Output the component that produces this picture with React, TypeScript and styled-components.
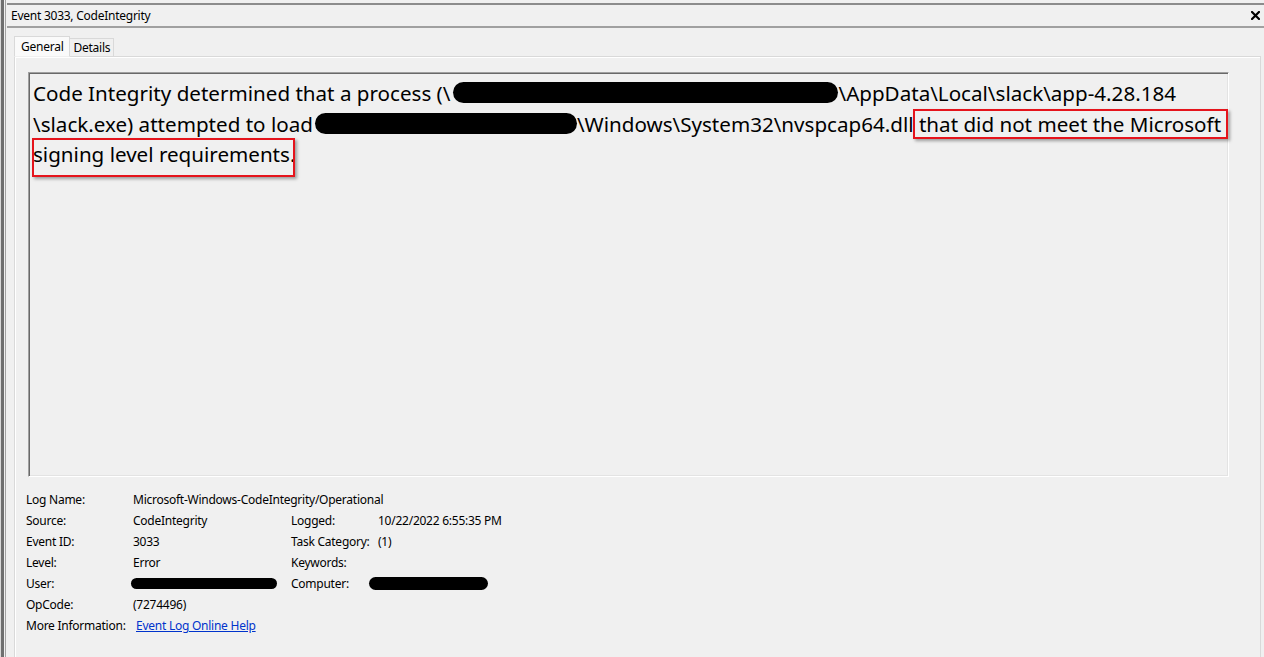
import React from 'react'
import styled, { createGlobalStyle } from 'styled-components'

/////////GLOBAL/////////
const GlobalStyle = createGlobalStyle`
	html, body {
		margin: 0;
		padding: 0;
		background: #f0f0f0;
	}
	body {
		font-family: 'Noto Sans', 'Open Sans', sans-serif;
		color: #000;
		letter-spacing: -0.25px;
		overflow: hidden;
	}
`

/////////STYLED/////////
const Window = styled.div`
	box-sizing: border-box;
	height: 657px;
	display: flex;
	flex-direction: column;
	padding-left: 7px;
	overflow: hidden;
	background: linear-gradient(
		to right,
		#d8d8d8 0 1px,
		#6f6f6f 1px 4px,
		#f0f0f0 4px 5px,
		#a3a3a3 5px 6px,
		#f0f0f0 6px
	);
`
const TitleBar = styled.div`
	margin-top: 3px;
	height: 21px;
	display: flex;
	align-items: center;
	justify-content: space-between;
	padding: 0 4px;
	border-top: 2px solid #8c8c8c;
	border-bottom: 2px solid #a0a0a0;
	font-size: 12px;
`
const CloseButton = styled.div`
	display: flex;
	align-items: center;
	justify-content: center;
	width: 10px;
	height: 10px;
	cursor: pointer;
`
const TabBar = styled.div`
	display: flex;
	align-items: flex-end;
	margin: 8px 0 0 7px;
	position: relative;
	z-index: 1;
`
const Tab = styled.div<{ $active?: boolean }>`
	box-sizing: border-box;
	height: ${(p) => (p.$active ? '21px' : '18px')};
	display: flex;
	align-items: center;
	padding: 0 ${(p) => (p.$active ? '6px' : '3px')};
	font-size: 12px;
	background: ${(p) => (p.$active ? '#fafafa' : '#f0f0f0')};
	border: 1px solid #d9d9d9;
	border-bottom: ${(p) => (p.$active ? '1px solid #f0f0f0' : 'none')};
	margin-bottom: ${(p) => (p.$active ? '-1px' : '0')};
	${(p) => (p.$active ? '' : 'border-left: none;')}
`
const Panel = styled.div`
	flex: 1;
	margin: 0 3px 0 7px;
	padding: 15px 0 0 11px;
	border: 1px solid #d9d9d9;
	border-bottom: none;
	box-shadow: inset 1px 1px #ffffff;
`
const MessageBox = styled.div`
	box-sizing: border-box;
	width: 1201px;
	height: 405px;
	margin-left: 2px;
	padding: 5px 4px;
	border: 1px solid;
	border-color: #a0a0a0 #ffffff #ffffff #a0a0a0;
	box-shadow: inset 1px 1px #696969, inset -1px -1px #e3e3e3;
	font-size: 20.6px;
	letter-spacing: 0;
`
const Line = styled.div`
	height: 30.5px;
	line-height: 30.5px;
	white-space: nowrap;
`
const Redact = styled.span<{ $w: number; $h: number; $shift?: number; $ml?: number }>`
	display: inline-block;
	width: ${(p) => p.$w}px;
	height: ${(p) => p.$h}px;
	margin-left: ${(p) => p.$ml || 0}px;
	background: #000;
	border-radius: ${(p) => p.$h / 2}px;
	vertical-align: middle;
	position: relative;
	top: ${(p) => p.$shift || 0}px;
`
const Marked = styled.span<{ $t: number; $b: number; $l: number; $r: number }>`
	display: inline-block;
	position: relative;

	&::after {
		content: '';
		position: absolute;
		top: ${(p) => p.$t}px;
		bottom: ${(p) => p.$b}px;
		left: ${(p) => p.$l}px;
		right: ${(p) => p.$r}px;
		border: 2px solid #e5141c;
		box-shadow: 2px 2px 3px rgba(0, 0, 0, 0.35);
		pointer-events: none;
	}
`
const Details = styled.div`
	display: grid;
	grid-template-columns: 107px 158px 87px 1fr;
	grid-auto-rows: 21px;
	align-items: center;
	margin-top: 12px;
	font-size: 12px;
	white-space: nowrap;
`
const Label = styled.div``
const Value = styled.div<{ $span?: number }>`
	grid-column: ${(p) => (p.$span ? `span ${p.$span}` : 'auto')};
`
const Link = styled.a`
	margin-left: 3px;
	color: #0033cc;
	text-decoration: underline;
	cursor: pointer;
`
const Blob = styled.div<{ $w: number; $h: number; $ml: number }>`
	width: ${(p) => p.$w}px;
	height: ${(p) => p.$h}px;
	margin-left: ${(p) => p.$ml}px;
	background: #000;
	border-radius: ${(p) => p.$h / 2}px;
`
/////////STYLED/////////

const rows: Array<[string, React.ReactNode, string?, React.ReactNode?]> = [
	['Source:', 'CodeIntegrity', 'Logged:', '10/22/2022 6:55:35 PM'],
	['Event ID:', '3033', 'Task Category:', '(1)'],
	['Level:', 'Error', 'Keywords:', ''],
	['User:', <Blob $w={146} $h={11} $ml={-2} />, 'Computer:', <Blob $w={119} $h={13} $ml={-9} />],
]

const App = () => {
	return (
		<>
			<GlobalStyle />
			<Window>
				<TitleBar>
					<span>Event 3033, CodeIntegrity</span>
					<CloseButton>
						<svg width="9" height="9" viewBox="0 0 9 9">
							<path d="M1 1 L8 8 M8 1 L1 8" stroke="#000" strokeWidth="2.2" strokeLinecap="square" />
						</svg>
					</CloseButton>
				</TitleBar>
				<TabBar>
					<Tab $active>General</Tab>
					<Tab>Details</Tab>
				</TabBar>
				<Panel>
					<MessageBox>
						<Line>
							{'Code Integrity determined that a process (\\'}
							<Redact $w={385} $h={21} $shift={-3} $ml={3} />
							{'\\AppData\\Local\\slack\\app-4.28.184'}
						</Line>
						<Line>
							{'\\slack.exe) attempted to load'}
							<Redact $w={262} $h={21} $shift={-2} $ml={2} />
							{'\\Windows\\System32\\nvspcap64.dll '}
							<Marked $t={0} $b={0} $l={-6} $r={-7}>
								that did not meet the Microsoft
							</Marked>
						</Line>
						<Line>
							<Marked $t={-1} $b={-7} $l={-1} $r={0}>
								signing level requirements.
							</Marked>
						</Line>
					</MessageBox>
					<Details>
						<Label>Log Name:</Label>
						<Value $span={3}>Microsoft-Windows-CodeIntegrity/Operational</Value>
						{rows.map(([l1, v1, l2, v2], i) => (
							<React.Fragment key={i}>
								<Label>{l1}</Label>
								<Value>{v1}</Value>
								<Label>{l2}</Label>
								<Value>{v2}</Value>
							</React.Fragment>
						))}
						<Label>OpCode:</Label>
						<Value $span={3}>(7274496)</Value>
						<Label>More Information:</Label>
						<Value $span={3}>
							<Link>Event Log Online Help</Link>
						</Value>
					</Details>
				</Panel>
			</Window>
		</>
	)
}

export default App
